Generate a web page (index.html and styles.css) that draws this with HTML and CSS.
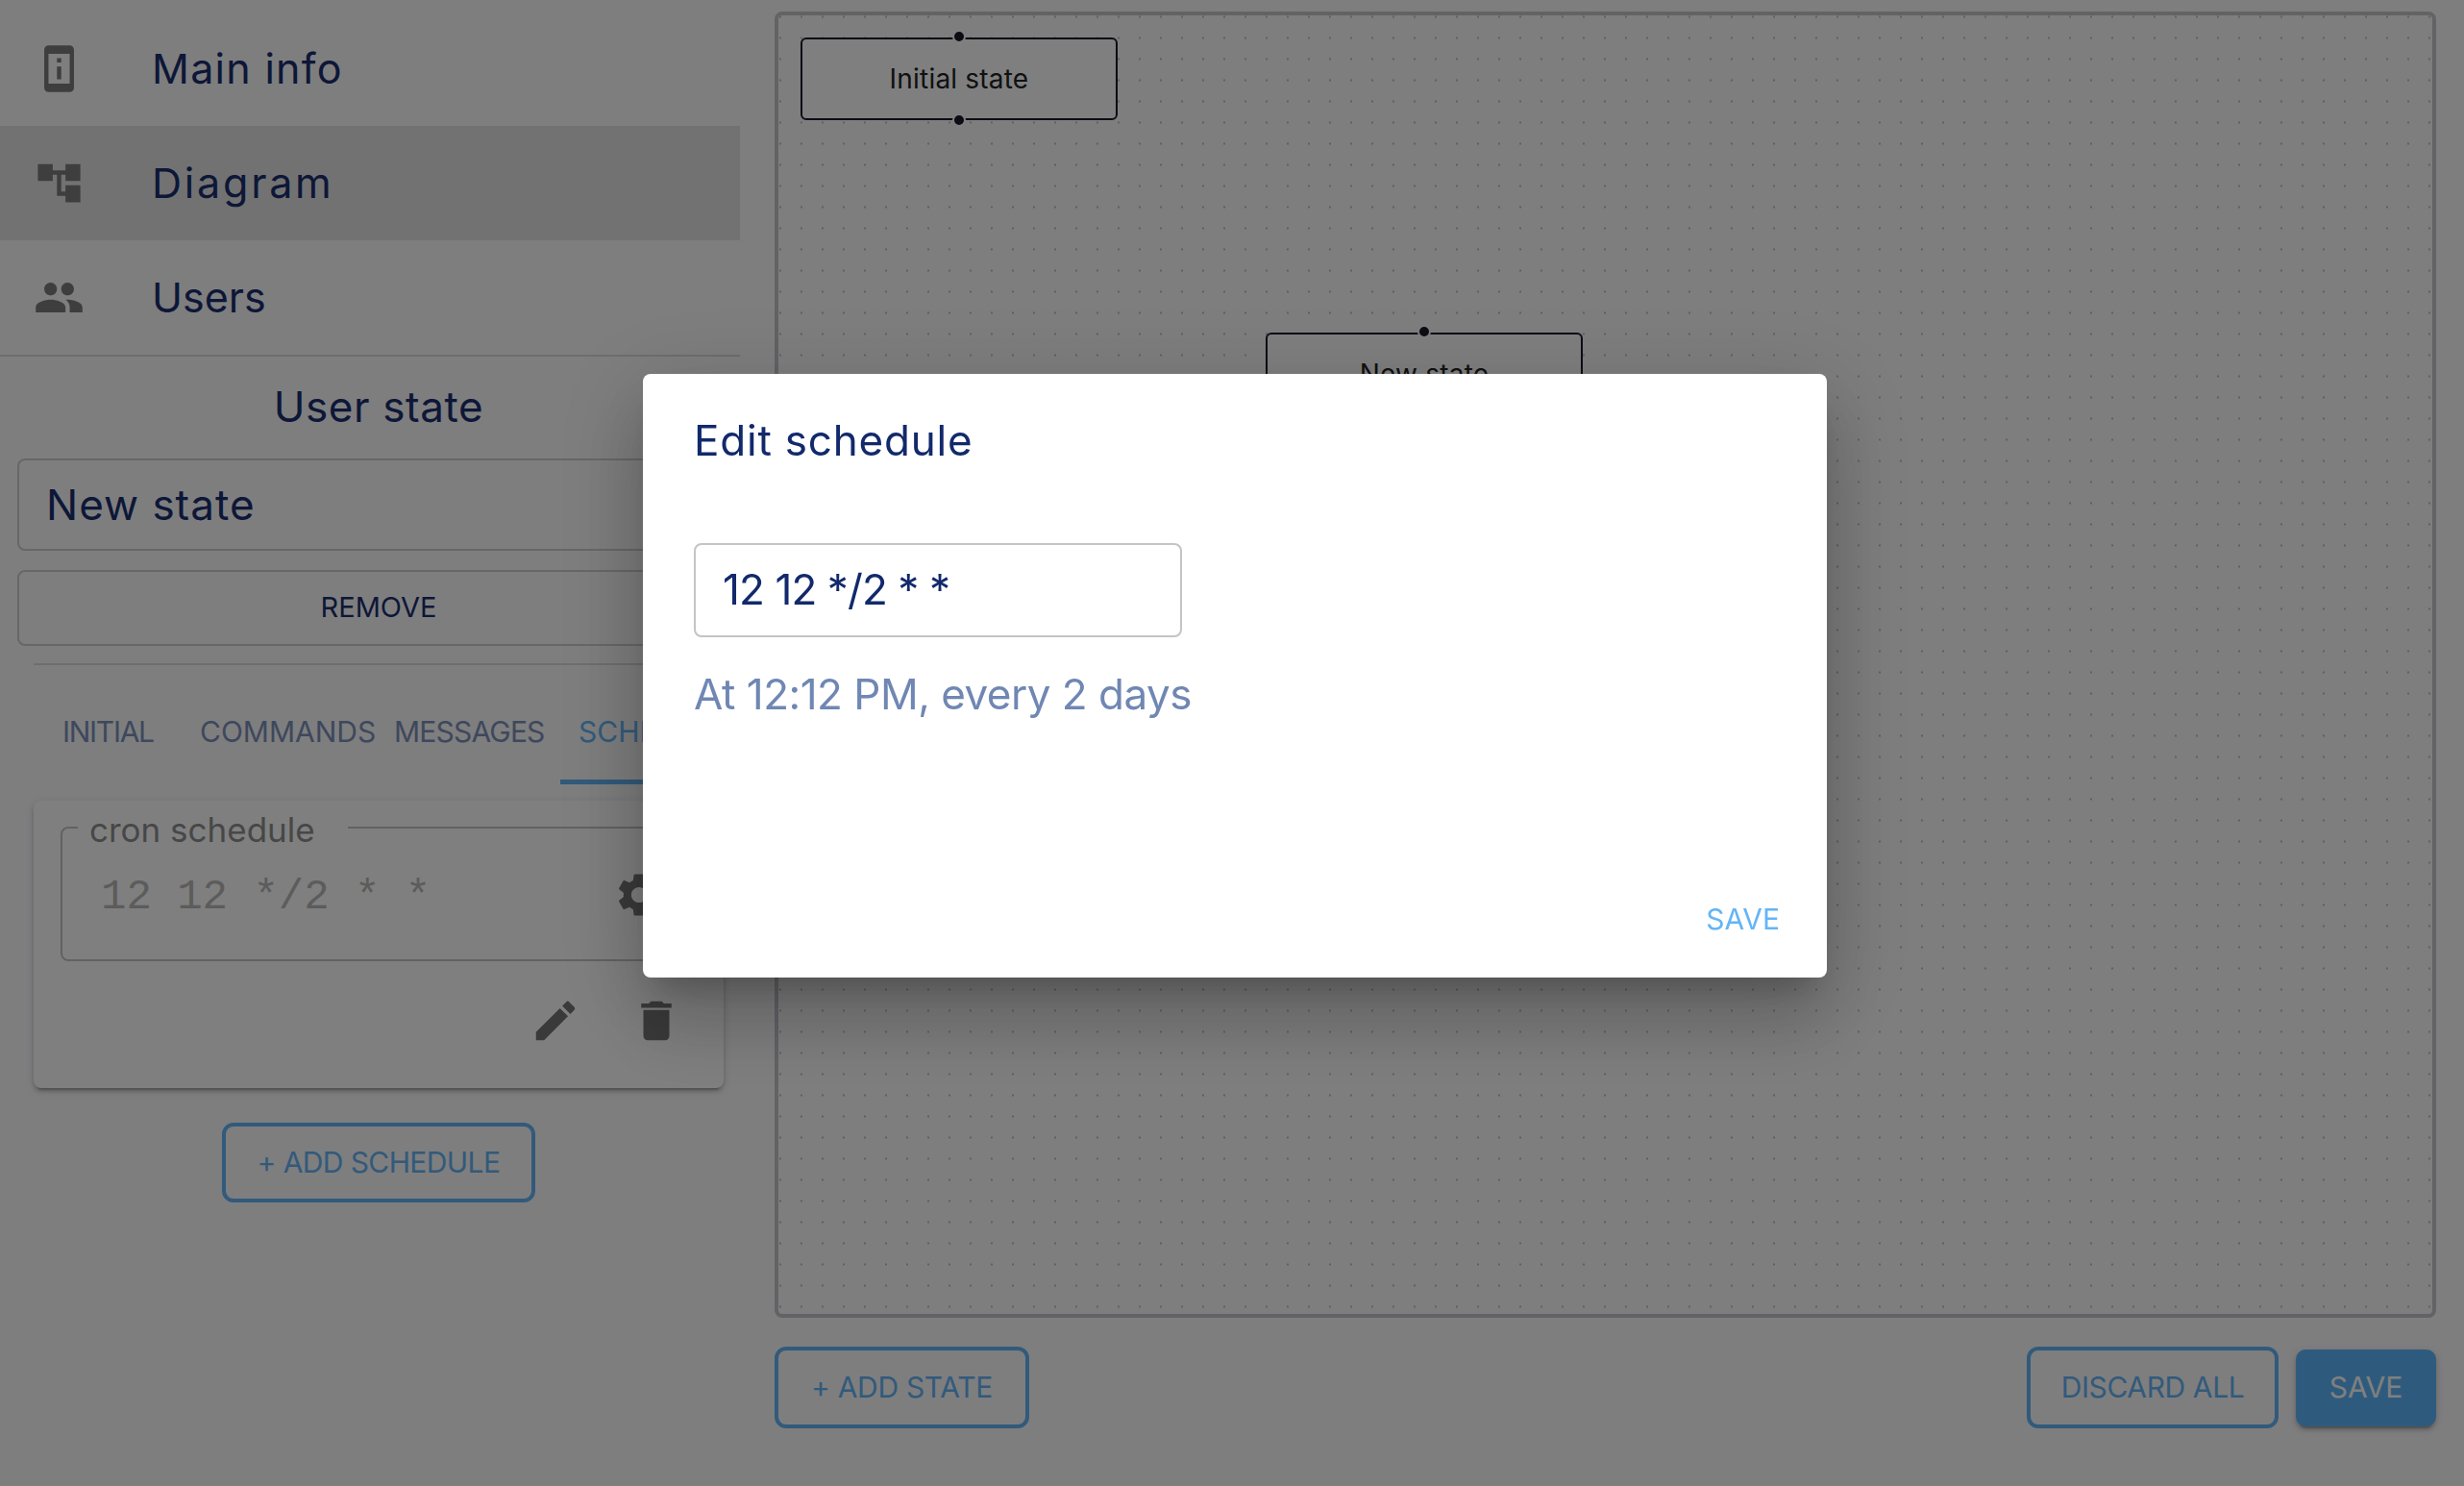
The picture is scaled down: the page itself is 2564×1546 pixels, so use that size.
FILE: index.html
```html
<!DOCTYPE html>
<html lang="en">
<head>
  <meta charset="UTF-8">
  <title>Edit schedule</title>
  <link rel="stylesheet" href="styles.css">
</head>
<body>
  <div class="app">
    <aside class="sidebar">
      <nav class="side-nav">
        <a class="nav-item">
          <svg class="nav-icon" viewBox="0 0 24 24"><path d="M17 1H7C5.900 1 5 1.900 5 3v18c0 1.100.9 2 2 2h10c1.100 0 2-.9 2-2V3c0-1.100-.9-2-2-2zm0 18H7V5h10v14z"/><path d="M11 7h2v2h-2zM11 11h2v6h-2z"/></svg>
          <span>Main info</span>
        </a>
        <a class="nav-item active">
          <svg class="nav-icon" viewBox="0 0 24 24"><path d="M22 11V3h-7v3H9V3H2v8h7V8h2v10h4v3h7v-8h-7v3h-2V8h2v3z"/></svg>
          <span>Diagram</span>
        </a>
        <a class="nav-item">
          <svg class="nav-icon" viewBox="0 0 24 24"><path d="M16 11c1.660 0 2.990-1.340 2.990-3S17.660 5 16 5c-1.660 0-3 1.340-3 3s1.340 3 3 3zm-8 0c1.660 0 2.990-1.340 2.990-3S9.660 5 8 5C6.340 5 5 6.340 5 8s1.340 3 3 3zm0 2c-2.330 0-7 1.170-7 3.500V19h14v-2.500c0-2.330-4.670-3.500-7-3.500zm8 0c-.29 0-.62.020-.97.050 1.160.84 1.970 1.970 1.970 3.450V19h6v-2.500c0-2.330-4.670-3.500-7-3.500z"/></svg>
          <span>Users</span>
        </a>
      </nav>

      <section class="state-panel">
        <h2 class="panel-title">User state</h2>
        <div class="name-field">New state</div>
        <button class="remove-btn">REMOVE</button>
        <div class="panel-rule"></div>

        <div class="tabs">
          <span class="tab tab-initial">INITIAL</span>
          <span class="tab tab-commands">COMMANDS</span>
          <span class="tab tab-messages">MESSAGES</span>
          <span class="tab tab-schedule">SCHEDULE</span>
        </div>

        <div class="schedule-card">
          <fieldset class="cron-field">
            <legend>cron schedule</legend>
            <span class="cron-value">12 12 */2 * *</span>
            <svg class="icon gear" viewBox="0 0 24 24"><path d="M19.140 12.940c.04-.3.060-.61.060-.94 0-.32-.02-.64-.07-.94l2.030-1.580a.49.49 0 0 0 .12-.61l-1.920-3.320a.488.488 0 0 0-.59-.22l-2.390.96c-.5-.38-1.030-.7-1.620-.94l-.36-2.540a.484.484 0 0 0-.48-.41h-3.840c-.24 0-.43.170-.47.41l-.36 2.540c-.59.240-1.130.570-1.620.94l-2.390-.96c-.22-.08-.47 0-.59.220L2.740 8.870c-.12.210-.08.470.12.610l2.030 1.580c-.05.300-.09.630-.09.940s.02.640.07.940l-2.030 1.580a.49.49 0 0 0-.12.610l1.920 3.320c.12.220.37.290.59.220l2.390-.96c.5.380 1.030.7 1.620.94l.36 2.540c.05.240.24.410.48.410h3.840c.24 0 .44-.17.47-.41l.36-2.540c.59-.24 1.130-.56 1.620-.94l2.390.96c.22.080.47 0 .59-.22l1.920-3.320c.12-.22.070-.47-.12-.61l-2.010-1.580zM12 15.600c-1.980 0-3.600-1.620-3.600-3.600s1.620-3.600 3.600-3.600 3.600 1.620 3.600 3.600-1.620 3.600-3.600 3.600z"/></svg>
          </fieldset>
          <div class="card-actions">
            <svg class="icon" viewBox="0 0 24 24"><path d="M3 17.250V21h3.750L17.810 9.940l-3.750-3.750L3 17.250zM20.710 7.040a.996.996 0 0 0 0-1.410l-2.340-2.340a.996.996 0 0 0-1.410 0l-1.830 1.830 3.750 3.750 1.830-1.830z"/></svg>
            <svg class="icon" viewBox="0 0 24 24"><path d="M6 19c0 1.100.9 2 2 2h8c1.100 0 2-.9 2-2V7H6v12zM19 4h-3.500l-1-1h-5l-1 1H5v2h14V4z"/></svg>
          </div>
        </div>

        <button class="outline-btn add-schedule">+ ADD SCHEDULE</button>
      </section>
    </aside>

    <main class="editor">
      <div class="canvas">
        <div class="node node-initial">Initial state<i class="handle handle-top"></i><i class="handle handle-bottom"></i></div>
        <div class="node node-new">New state<i class="handle handle-top"></i><i class="handle handle-bottom"></i></div>
      </div>
      <div class="editor-actions">
        <button class="outline-btn add-state">+ ADD STATE</button>
        <div class="actions-right">
          <button class="outline-btn discard">DISCARD ALL</button>
          <button class="save-btn">SAVE</button>
        </div>
      </div>
    </main>
  </div>

  <div class="backdrop"></div>
  <div class="dialog">
    <h2 class="dialog-title">Edit schedule</h2>
    <div class="dialog-input">12 12 */2 * *</div>
    <p class="dialog-desc">At 12:12 PM, every 2 days</p>
    <div class="dialog-actions"><button class="text-btn">SAVE</button></div>
  </div>
</body>
</html>
```

FILE: styles.css
```css
html, body {
  margin: 0;
  padding: 0;
  height: 100%;
  overflow: hidden;
}
body {
  font-family: 'Inter', 'Open Sans', sans-serif;
  background-color: #fcfcff;
  color: #1a2f6e;
}
button {
  font-family: inherit;
  background: none;
  cursor: pointer;
  padding: 0 0 2px;
}

.app {
  display: flex;
  width: 2564px;
  height: 1546px;
}

/* left column */
.sidebar {
  width: 806px;
  flex: none;
}
.side-nav {
  width: 770px;
  padding-top: 12px;
  border-bottom: 2px solid #dcdcdc;
}
.nav-item {
  display: flex;
  align-items: center;
  height: 119px;
  font-size: 43px;
  letter-spacing: 1.300px;
}
.nav-item span { padding-bottom: 2px; }
.nav-item:nth-child(2) { letter-spacing: 2.800px; }
.nav-item:nth-child(3) { letter-spacing: 0; }
.nav-item.active {
  background-color: #e4e4e6;
}
.nav-icon {
  flex: none;
  width: 53px;
  height: 53px;
  margin-left: 35px;
  margin-right: 70px;
  fill: #7c7c7c;
}

.state-panel {
  width: 788px;
  display: flex;
  flex-direction: column;
  align-items: center;
}
.panel-title {
  margin: 24px 0 0;
  height: 82px;
  line-height: 56px;
  font-size: 44px;
  font-weight: 400;
  letter-spacing: 0.600px;
}
.name-field {
  box-sizing: border-box;
  width: 752px;
  height: 96px;
  padding-left: 28px;
  line-height: 92px;
  font-size: 44px;
  letter-spacing: 1px;
  border: 2px solid #cfcfd2;
  border-radius: 8px;
}
.remove-btn {
  box-sizing: border-box;
  width: 752px;
  height: 79px;
  margin-top: 20px;
  font-size: 29px;
  color: #1a2f6e;
  border: 2px solid #cfcfd2;
  border-radius: 8px;
}
.panel-rule {
  width: 718px;
  height: 2px;
  margin-top: 18px;
  background-color: #dcdcdc;
}

.tabs {
  display: flex;
  width: 718px;
  height: 124px;
  font-size: 30px;
  color: #7d90b8;
}
.tab {
  flex: none;
  line-height: 138px;
  white-space: nowrap;
}
.tab-initial { margin-left: 30px; width: 143px; letter-spacing: -1.300px; }
.tab-commands { width: 202px; }
.tab-messages { width: 173px; letter-spacing: -0.800px; }
.tab-schedule {
  color: #64b5f6;
  padding: 0 19px;
  border-bottom: 5px solid #64b5f6;
  height: 119px;
}

.schedule-card {
  box-sizing: border-box;
  width: 718px;
  height: 299px;
  margin-top: 17px;
  padding-top: 1px;
  background-color: #fff;
  border-radius: 8px;
  box-shadow: 0 6px 2px -4px rgba(0, 0, 0, 0.2), 0 4px 4px rgba(0, 0, 0, 0.14), 0 2px 10px rgba(0, 0, 0, 0.12);
}
.cron-field {
  position: relative;
  box-sizing: border-box;
  width: 660px;
  height: 144px;
  margin: 22px 0 0 28px;
  padding: 0;
  border: 2px solid #c4c4c4;
  border-radius: 8px;
}
.cron-field legend {
  margin-left: 16px;
  padding: 0 34px 0 12px;
  font-size: 35px;
  line-height: 14px;
  height: 10px;
  color: #8f8f8f;
}
.cron-value {
  display: block;
  padding: 39px 0 0 40px;
  font-family: 'Liberation Mono', monospace;
  font-size: 44px;
  line-height: 56px;
  color: #b8b8b8;
}
.icon {
  width: 54px;
  height: 54px;
  fill: #757575;
}
.gear {
  position: absolute;
  top: 38px;
  right: 29px;
}
.card-actions {
  display: flex;
  justify-content: flex-end;
  gap: 51px;
  margin: 35px 43px 0 0;
}

.outline-btn {
  box-sizing: border-box;
  height: 84px;
  font-size: 30px;
  letter-spacing: -0.300px;
  color: #64b5f6;
  border: 4px solid #64b5f6;
  border-radius: 12px;
}
.add-schedule {
  width: 326px;
  height: 83px;
  margin-top: 36px;
  letter-spacing: -0.600px;
}

/* right column */
.editor {
  width: 1729px;
  display: flex;
  flex-direction: column;
}
.canvas {
  position: relative;
  box-sizing: border-box;
  width: 100%;
  height: 1359px;
  margin-top: 12px;
  border: 4px solid #c6c6cc;
  border-radius: 8px;
  background-color: #fcfcff;
  background-image: radial-gradient(circle at 2px 1.500px, #c0c0c4 0.8px, transparent 1.400px);
  background-size: 22px 22px;
}
.node {
  position: absolute;
  box-sizing: border-box;
  width: 330px;
  height: 86px;
  line-height: 82px;
  text-align: center;
  font-size: 28px;
  letter-spacing: 0.200px;
  color: #222;
  border: 2px solid #1a192b;
  border-radius: 6px;
}
.node-initial { left: 23px; top: 23px; background-color: #fff; }
.node-new { left: 507px; top: 330px; background-color: #fff; }
.handle {
  position: absolute;
  left: 156px;
  width: 10px;
  height: 10px;
  background-color: #1a192b;
  border: 2px solid #fff;
  border-radius: 50%;
}
.handle-top { top: -10px; }
.handle-bottom { bottom: -9px; }

.editor-actions {
  display: flex;
  justify-content: space-between;
  align-items: center;
  margin-top: 30px;
}
.actions-right {
  display: flex;
  align-items: center;
  gap: 18px;
}
.add-state { width: 265px; height: 85px; }
.discard { width: 262px; height: 85px; letter-spacing: -0.400px; }
.save-btn {
  width: 146px;
  height: 80px;
  font-size: 30px;
  color: #fff;
  background-color: #5db7fa;
  border: none;
  border-radius: 10px;
  box-shadow: 0 6px 2px -4px rgba(0, 0, 0, 0.2), 0 4px 4px rgba(0, 0, 0, 0.14), 0 2px 10px rgba(0, 0, 0, 0.12);
}

/* modal */
.backdrop {
  position: fixed;
  inset: 0;
  background-color: rgba(0, 0, 0, 0.5);
}
.dialog {
  position: fixed;
  left: 669px;
  top: 389px;
  box-sizing: border-box;
  width: 1232px;
  height: 628px;
  padding: 0 53px;
  background-color: #fff;
  border-radius: 8px;
  box-shadow: 0 22px 30px -14px rgba(0, 0, 0, 0.2), 0 48px 76px 6px rgba(0, 0, 0, 0.14), 0 18px 92px 16px rgba(0, 0, 0, 0.12);
}
.dialog-title {
  margin: 0;
  padding-top: 40px;
  line-height: 58px;
  font-size: 44px;
  font-weight: 400;
  letter-spacing: 0.800px;
  color: #12296b;
}
.dialog-input {
  box-sizing: border-box;
  width: 508px;
  height: 98px;
  margin-top: 78px;
  padding-left: 28px;
  line-height: 92px;
  font-size: 44px;
  letter-spacing: -0.900px;
  color: #12296b;
  border: 2px solid #c4c4c4;
  border-radius: 8px;
}
.dialog-desc {
  margin: 30px 0 0;
  line-height: 58px;
  font-size: 44px;
  letter-spacing: -0.500px;
  color: #7087b3;
}
.dialog-actions {
  display: flex;
  justify-content: flex-end;
  margin-top: 187px;
}
.text-btn {
  border: none;
  font-size: 30px;
  color: #64b5f6;
  margin-right: -4px;
}
```
